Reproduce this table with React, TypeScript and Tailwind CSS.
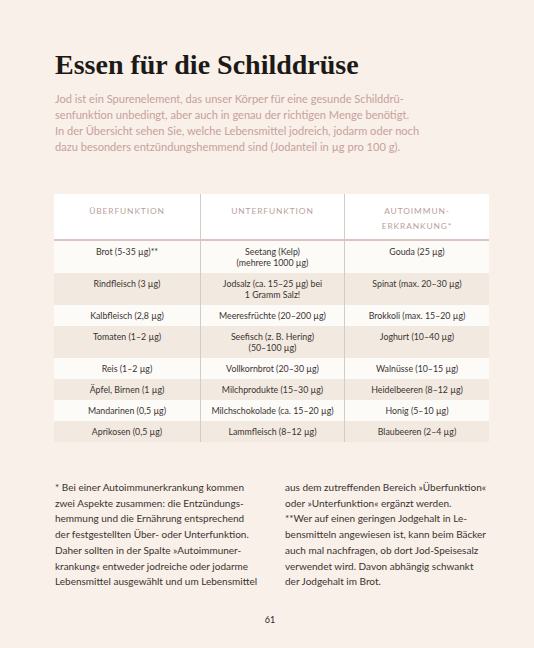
import React from 'react';

const rows: [string, string, string][] = [
  ['Brot (5-35 µg)**', 'Seetang (Kelp)\n(mehrere 1000 µg)', 'Gouda (25 µg)'],
  ['Rindfleisch (3 µg)', 'Jodsalz (ca. 15–25 µg) bei\n1 Gramm Salz!', 'Spinat (max. 20–30 µg)'],
  ['Kalbfleisch (2,8 µg)', 'Meeresfrüchte (20–200 µg)', 'Brokkoli (max. 15–20 µg)'],
  ['Tomaten (1–2 µg)', 'Seefisch (z. B. Hering)\n(50–100 µg)', 'Joghurt (10–40 µg)'],
  ['Reis (1–2 µg)', 'Vollkornbrot (20–30 µg)', 'Walnüsse (10–15 µg)'],
  ['Äpfel, Birnen (1 µg)', 'Milchprodukte (15–30 µg)', 'Heidelbeeren (8–12 µg)'],
  ['Mandarinen (0,5 µg)', 'Milchschokolade (ca. 15–20 µg)', 'Honig (5–10 µg)'],
  ['Aprikosen (0,5 µg)', 'Lammfleisch (8–12 µg)', 'Blaubeeren (2–4 µg)'],
];

const sans = { fontFamily: 'Lato, "Open Sans", sans-serif' };

export default function App() {
  return (
    <div className="w-[534px] h-[648px] bg-[#f8f0e9] text-[#3a3330] flex flex-col" style={sans}>
      <div className="px-[55px] pt-[47px]">
        <h1
          className="text-[28px] font-bold leading-[36px] text-[#1c1916]"
          style={{ fontFamily: '"Liberation Serif", serif' }}
        >
          Essen für die Schilddrüse
        </h1>
        <p className="mt-[8px] text-[11.1px] leading-[16px] text-[#c8a09b] w-[400px]">
          Jod ist ein Spurenelement, das unser Körper für eine gesunde Schilddrü-
          <br />
          senfunktion unbedingt, aber auch in genau der richtigen Menge benötigt.
          <br />
          In der Übersicht sehen Sie, welche Lebensmittel jodreich, jodarm oder noch
          <br />
          dazu besonders entzündungshemmend sind (Jodanteil in µg pro 100 g).
        </p>
      </div>

      <div className="ml-[54px] mt-[39px] w-[435px] text-[8.8px] leading-[11px] text-center">
        <div className="grid grid-cols-[146px_144px_145px] bg-white border-b-2 border-[#dcc4c0] text-[#b8a19c] text-[8.4px] tracking-[0.9px] uppercase">
          <div className="pt-[10px] pb-[5px] leading-[15px]">Überfunktion</div>
          <div className="pt-[10px] pb-[5px] leading-[15px] border-l border-[#d2cbc6]">Unterfunktion</div>
          <div className="pt-[10px] pb-[5px] leading-[15px] border-l border-[#d2cbc6]">
            Autoimmun-
            <br />
            erkrankung*
          </div>
        </div>
        {rows.map((r, i) => (
          <div
            key={i}
            className={`grid grid-cols-[146px_144px_145px] ${i % 2 === 0 ? 'bg-[#fdfbf8]' : 'bg-[#f2eae1]'}`}
          >
            {r.map((c, j) => (
              <div
                key={j}
                className={`px-1 py-[5px] whitespace-pre-line ${j > 0 ? 'border-l border-[#d2cbc6]' : ''}`}
              >
                {c}
              </div>
            ))}
          </div>
        ))}
      </div>

      <div className="px-[55px] mt-[38px] grid grid-cols-[207px_207px] gap-x-[23px] text-[10px] leading-[15.7px] text-[#3a3330]">
        <p className="whitespace-nowrap">
          * Bei einer Autoimmunerkrankung kommen
          <br />
          zwei Aspekte zusammen: die Entzündungs-
          <br />
          hemmung und die Ernährung entsprechend
          <br />
          der festgestellten Über- oder Unterfunktion.
          <br />
          Daher sollten in der Spalte »Autoimmuner-
          <br />
          krankung« entweder jodreiche oder jodarme
          <br />
          Lebensmittel ausgewählt und um Lebensmittel
        </p>
        <p className="whitespace-nowrap">
          aus dem zutreffenden Bereich »Überfunktion«
          <br />
          oder »Unterfunktion« ergänzt werden.
          <br />
          **Wer auf einen geringen Jodgehalt in Le-
          <br />
          bensmitteln angewiesen ist, kann beim Bäcker
          <br />
          auch mal nachfragen, ob dort Jod-Speisesalz
          <br />
          verwendet wird. Davon abhängig schwankt
          <br />
          der Jodgehalt im Brot.
        </p>
      </div>

      <div className="mt-[23px] text-center text-[9px] text-[#2f2a27] pl-[6px]">61</div>
    </div>
  );
}
